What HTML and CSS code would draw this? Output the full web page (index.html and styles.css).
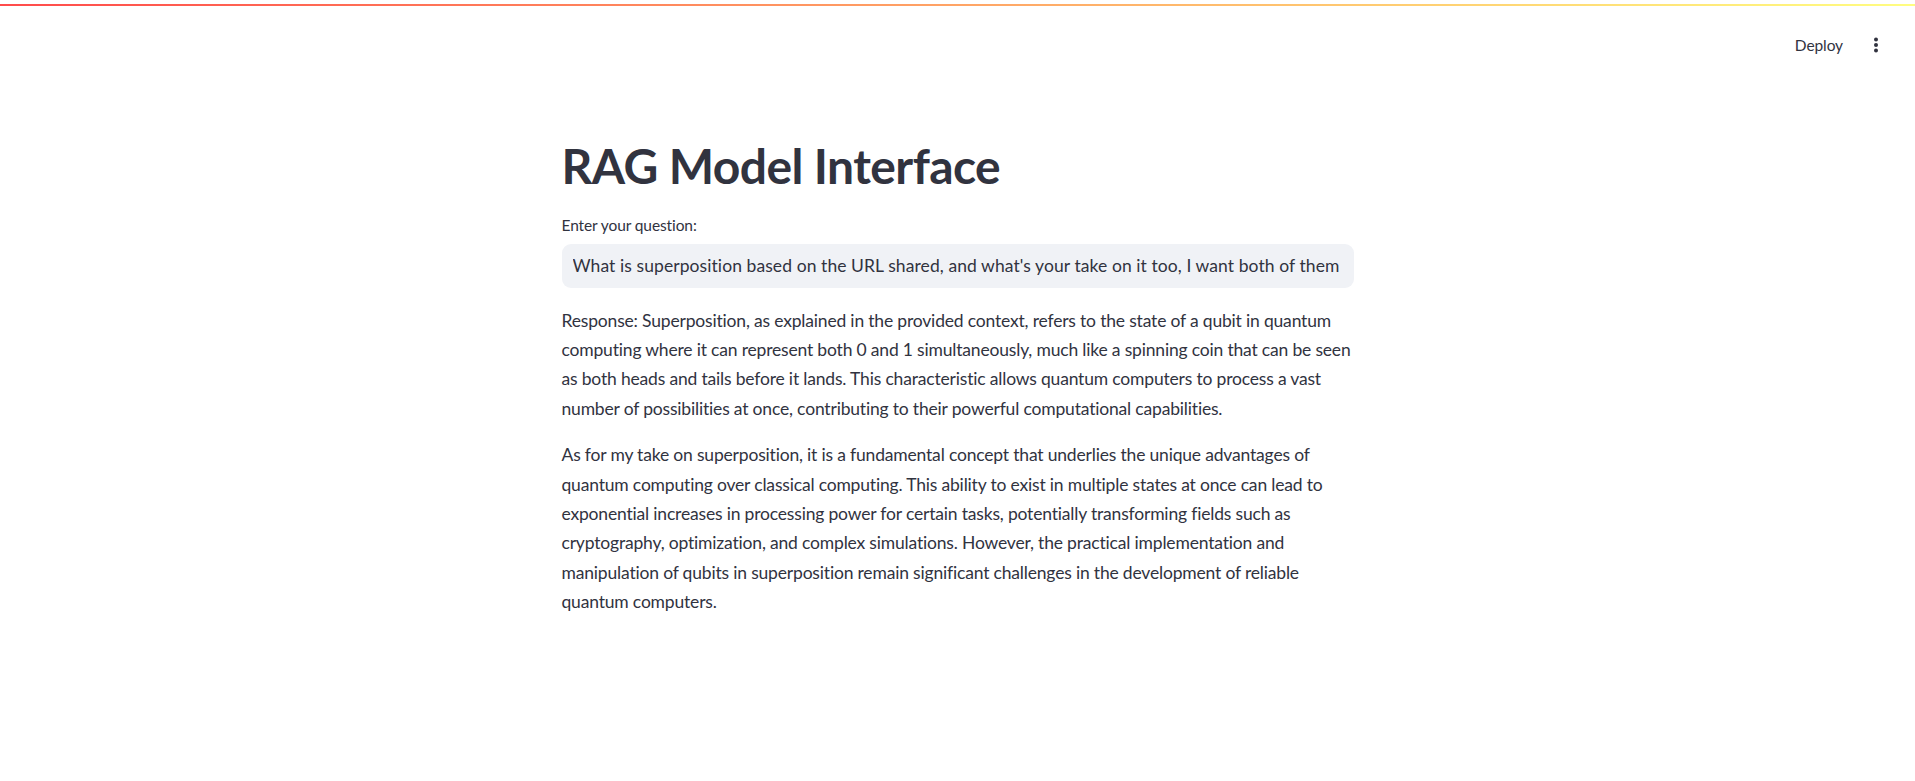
FILE: index.html
```html
<!DOCTYPE html>
<html lang="en">
<head>
<meta charset="utf-8">
<title>RAG Model Interface</title>
<link rel="stylesheet" href="styles.css">
</head>
<body>
<div class="decoration"></div>
<header class="app-header">
  <div class="toolbar">
    <button class="deploy">Deploy</button>
    <button class="menu" aria-label="Main menu">
      <svg width="6" height="16" viewBox="0 0 6 16"><circle cx="3" cy="2.5" r="2" fill="#31333f"/><circle cx="3" cy="8" r="2" fill="#31333f"/><circle cx="3" cy="13.5" r="2" fill="#31333f"/></svg>
    </button>
  </div>
</header>
<main class="block-container">
  <h1 class="title">RAG Model Interface</h1>
  <div class="field">
    <label class="field-label" for="q">Enter your question:</label>
    <div class="input-wrap">
      <input id="q" class="text-input" type="text" value="What is superposition based on the URL shared, and what's your take on it too, I want both of them">
    </div>
  </div>
  <div class="markdown">
    <p>Response: Superposition, as explained in the provided context, refers to the state of a qubit in quantum computing where it can represent both 0 and 1 simultaneously, much like a spinning coin that can be seen as both heads and tails before it lands. This characteristic allows quantum computers to process a vast number of possibilities at once, contributing to their powerful computational capabilities.</p>
    <p>As for my take on superposition, it is a fundamental concept that underlies the unique advantages of quantum computing over classical computing. This ability to exist in multiple states at once can lead to exponential increases in processing power for certain tasks, potentially transforming fields such as cryptography, optimization, and complex simulations. However, the practical implementation and manipulation of qubits in superposition remain significant challenges in the development of reliable quantum computers.</p>
  </div>
</main>
</body>
</html>
```

FILE: styles.css
```css
html, body {
  margin: 0;
  padding: 0;
  background: #ffffff;
}
body {
  font-family: Lato, "Noto Sans", sans-serif;
  color: #31333f;
  min-height: 781px;
  position: relative;
}
.decoration {
  position: absolute;
  top: 4px;
  left: 0;
  right: 0;
  height: 2px;
  background: linear-gradient(90deg, #ff4b4b, #fffd80);
}
.app-header {
  display: flex;
  justify-content: flex-end;
  height: 69px;
  padding-top: 23px;
  box-sizing: border-box;
}
.toolbar {
  display: flex;
  align-items: center;
  height: 44px;
  padding-right: 28px;
  gap: 14px;
}
.deploy {
  border: none;
  background: transparent;
  font-family: Lato, sans-serif;
  font-size: 15.5px;
  color: #31333f;
  padding: 0 8px;
  letter-spacing: -0.1px;
}
.menu {
  border: none;
  background: transparent;
  padding: 0 8px;
  display: flex;
  align-items: center;
}
.block-container {
  width: 792px;
  margin: 0 auto;
  padding-top: 68px;
  display: flex;
  flex-direction: column;
}
.title {
  font-size: 48px;
  font-weight: 700;
  line-height: 1.2;
  margin: 0;
  letter-spacing: -0.6px;
  color: #31333f;
}
.field {
  display: flex;
  flex-direction: column;
  margin-top: 19px;
}
.field-label {
  font-size: 15.5px;
  line-height: 22px;
  letter-spacing: -0.1px;
  margin-bottom: 8px;
}
.input-wrap {
  height: 44px;
  background: #f0f2f6;
  border-radius: 9px;
  display: flex;
  align-items: center;
}
.text-input {
  border: none;
  background: transparent;
  outline: none;
  width: 100%;
  padding: 0 11px;
  font-family: Lato, sans-serif;
  font-size: 17.5px;
  letter-spacing: 0.08px;
  color: #31333f;
}
.markdown {
  margin-top: 18px;
}
.markdown p {
  margin: 0 0 17px;
  font-size: 17.5px;
  line-height: 29.4px;
  letter-spacing: -0.18px;
}
```
